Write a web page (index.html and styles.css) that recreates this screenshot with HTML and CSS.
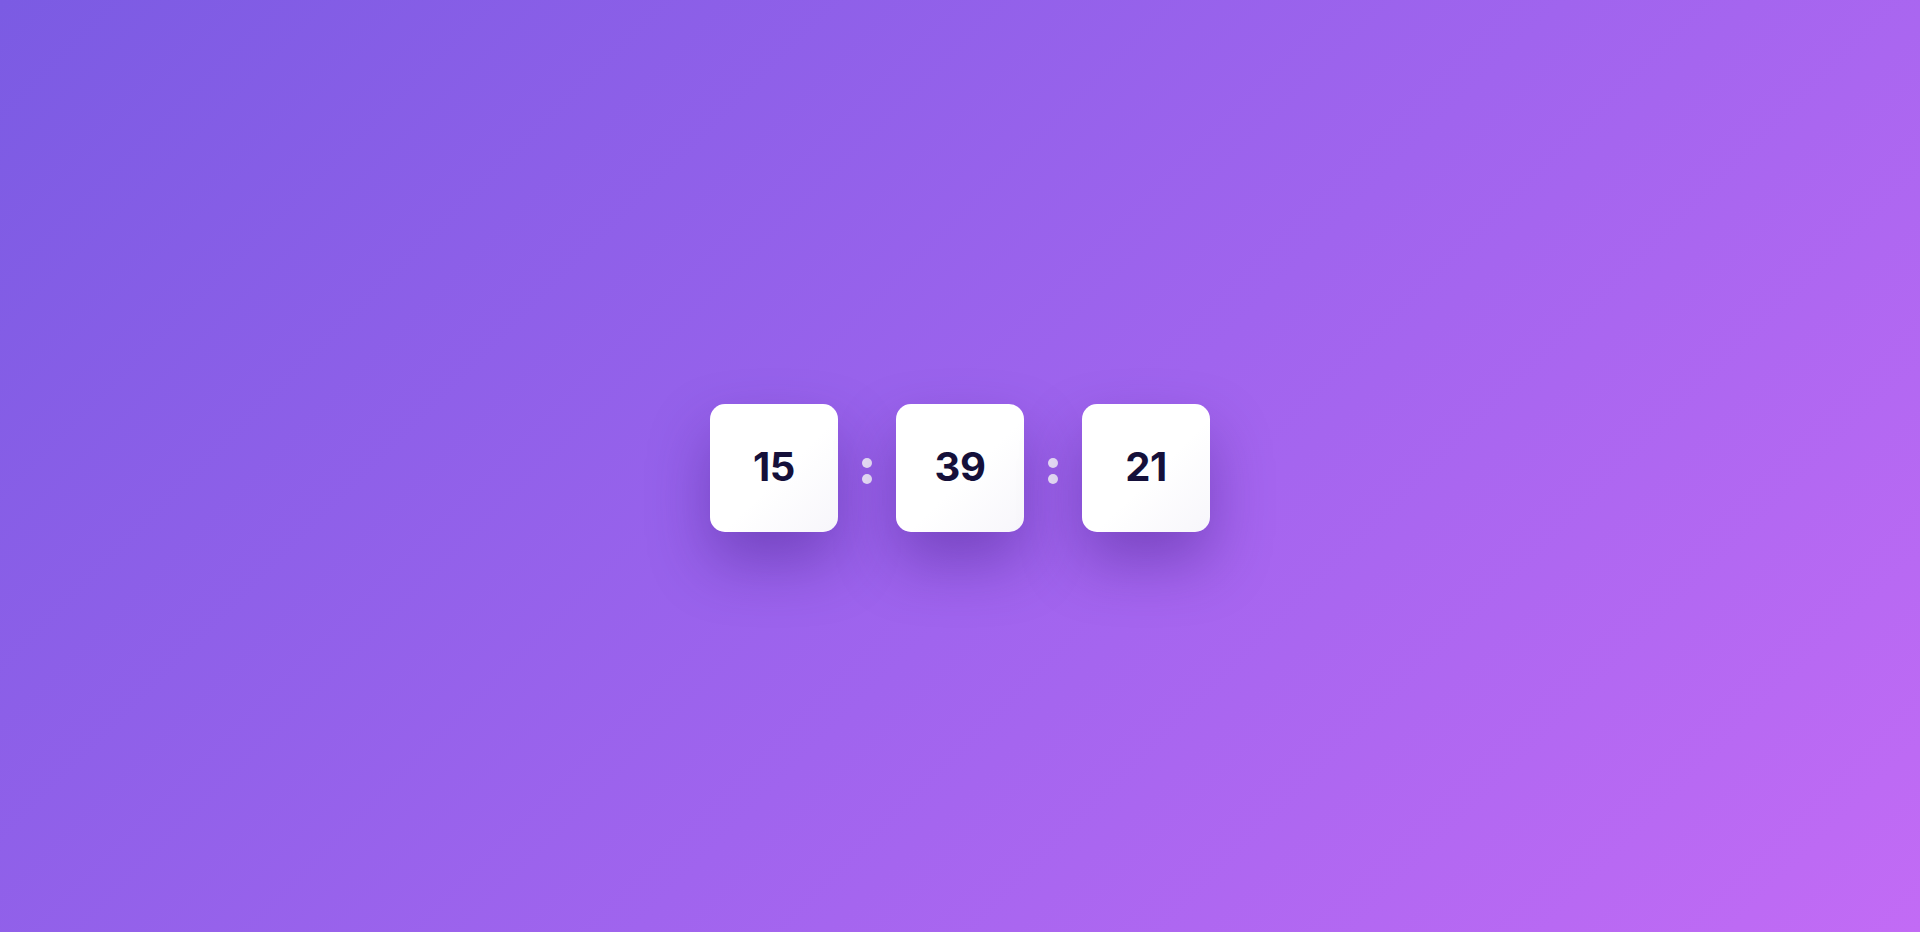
FILE: index.html
```html
<!DOCTYPE html>
<html lang="en">
<head>
<meta charset="utf-8">
<title>Clock</title>
<link rel="stylesheet" href="styles.css">
</head>
<body>
<main class="stage">
  <div class="clock">
    <div class="unit"><span class="digits">15</span></div>
    <div class="sep"><span class="dot"></span><span class="dot"></span></div>
    <div class="unit"><span class="digits">39</span></div>
    <div class="sep"><span class="dot"></span><span class="dot"></span></div>
    <div class="unit"><span class="digits">21</span></div>
  </div>
</main>
</body>
</html>
```

FILE: styles.css
```css
html, body {
  margin: 0;
  padding: 0;
  height: 100%;
}
body {
  background: linear-gradient(135deg, #7b5be3 0%, #a064ee 55%, #c26bf5 100%);
  font-family: "Inter", "Noto Sans", sans-serif;
}
.stage {
  height: 100vh;
  display: flex;
  align-items: center;
  justify-content: center;
}
.clock {
  display: flex;
  align-items: center;
  margin-top: 4px;
}
.unit {
  width: 128px;
  height: 128px;
  border-radius: 15px;
  background: linear-gradient(135deg, #ffffff 0%, #ffffff 55%, #f7f6fb 100%);
  box-shadow: 0 30px 60px rgba(55, 20, 120, 0.38);
  display: flex;
  align-items: center;
  justify-content: center;
}
.digits {
  font-size: 40px;
  font-weight: 700;
  color: #15103a;
  letter-spacing: -0.5px;
  line-height: 1;
  margin-top: -2px;
}
.sep {
  width: 58px;
  display: flex;
  flex-direction: column;
  align-items: center;
  gap: 6px;
  margin-top: 5px;
}
.dot {
  width: 10px;
  height: 10px;
  border-radius: 50%;
  background: rgba(240, 236, 248, 0.92);
}
```
